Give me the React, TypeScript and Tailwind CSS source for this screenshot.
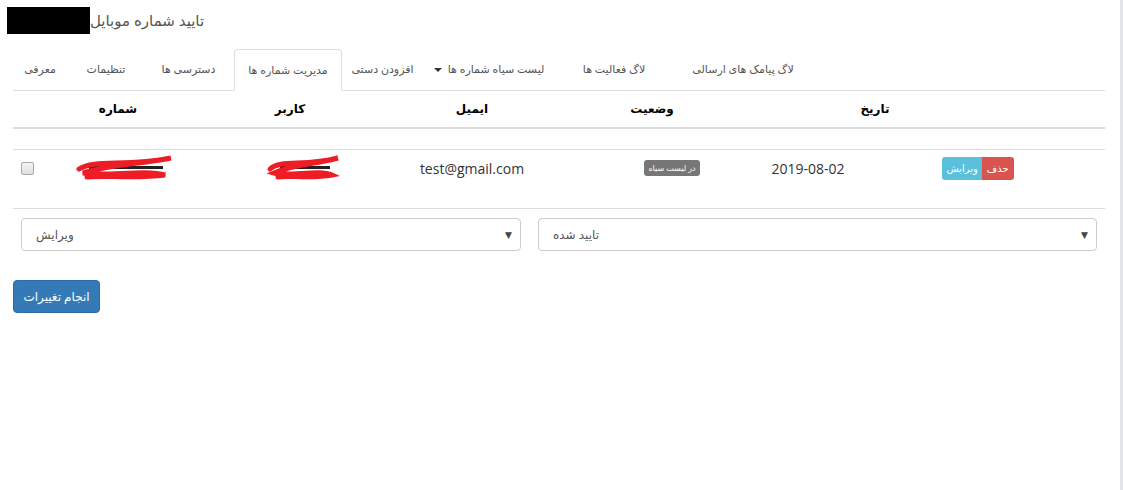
import React from 'react';

const fa = "font-['Open_Sans','DejaVu_Sans',sans-serif]";

const tabs = [
  { label: 'معرفی', w: 'w-[54px]' },
  { label: 'تنظیمات', w: 'w-[74px]' },
  { label: 'دسترسی ها', w: 'w-[87px]' },
  { label: 'مدیریت شماره ها', w: 'w-[108px]', active: true },
  { label: 'افزودن دستی', w: 'w-[77px]' },
  { label: 'لیست سیاه شماره ها', w: 'w-[132px]', caret: true },
  { label: 'لاگ فعالیت ها', w: 'w-[114px]' },
  { label: 'لاگ پیامک های ارسالی', w: 'w-[140px]' },
];

function Scribble({ width }: { width: number }) {
  // red marker over the hidden value
  return (
    <svg width={width} height="26" viewBox={`0 0 ${width} 26`}>
      <rect x="14" y="11" width={width - 26} height="3" fill="#222" />
      <rect x="10" y="17" width={width - 30} height="2" fill="#444" />
      <path
        d={`M4 14 C ${width * 0.2} 4, ${width * 0.5} 12, ${width - 4} 3 C ${width * 0.6} 10, ${width * 0.4} 8, 8 18 C ${width * 0.3} 22, ${width * 0.7} 14, ${width - 10} 20 C ${width * 0.6} 24, ${width * 0.3} 20, 12 22`}
        fill="none"
        stroke="#ee1c25"
        strokeWidth="5"
        strokeLinecap="round"
      />
    </svg>
  );
}

function FakeSelect({ value, className }: { value: string; className: string }) {
  return (
    <div className={`flex h-[33px] items-center justify-between rounded-[4px] border border-[#ccc] bg-white pl-[14px] pr-[8px] ${className}`}>
      <span className="text-[12px] text-[#555]">{value}</span>
      <span className="text-[9px] text-[#444]">▼</span>
    </div>
  );
}

export default function App() {
  return (
    <div className={`flex min-h-[490px] w-full bg-white ${fa}`}>
      <div className="flex-1 px-[13px] pr-[15px]">
        {/* title */}
        <div className="flex items-center pt-[7px]">
          <div className="-ml-[6px] h-[27px] w-[83px] bg-black" />
          <h1 className="text-[15px] leading-[27px] text-[#555]">تایید شماره موبایل</h1>
        </div>

        {/* tabs */}
        <div className="mt-[15px] flex h-[42px] items-stretch gap-[2px] border-b border-[#ddd]">
          {tabs.map((t, i) => (
            <div
              key={i}
              className={`${t.w} flex items-center justify-center rounded-t-[4px] text-[11px] text-[#555] ${
                t.active ? '-mb-px border border-b-white border-[#ddd] bg-white' : 'border border-transparent'
              }`}
            >
              {t.caret && (
                <span className="mr-[6px] h-0 w-0 border-x-[4px] border-t-[4px] border-x-transparent border-t-[#333]" />
              )}
              <span>{t.label}</span>
            </div>
          ))}
        </div>

        {/* table header */}
        <div className="grid h-[38px] grid-cols-[27px_156px_188px_176px_184px_262px_1fr] items-center border-b-2 border-[#ddd] text-center text-[12px] font-bold text-black">
          <div />
          <div>شماره</div>
          <div>کاربر</div>
          <div>ایمیل</div>
          <div>وضعیت</div>
          <div>تاریخ</div>
          <div />
        </div>
        <div className="h-[21px] border-b border-[#ddd]" />

        {/* data row */}
        <div className="grid h-[59px] grid-cols-[27px_156px_216px_120px_68px_144px_128px_212px_1fr] items-center border-b border-[#ddd] pb-[22px] text-center">
          <div className="flex justify-start pl-[8px]">
            <div className="h-[13px] w-[13px] rounded-[2px] border border-[#a9a9a9] bg-gradient-to-b from-[#f4f4f4] to-[#dedede]" />
          </div>
          <div className="flex justify-center pl-[14px]">
            <Scribble width={100} />
          </div>
          <div className="flex justify-center">
            <Scribble width={76} />
          </div>
          <div className="text-[14px] text-[#333]">test@gmail.com</div>
          <div />
          <div className="flex justify-center">
            <span className="rounded-[3px] bg-[#777] px-[4px] py-[2px] text-[8px] leading-[12px] text-white">در لیست سیاه</span>
          </div>
          <div className="text-[14px] text-[#333]">2019-08-02</div>
          <div className="flex justify-center">
            <span className="rounded-l-[3px] bg-[#5bc0de] px-[4px] text-[10px] leading-[23px] text-white">ویرایش</span>
            <span className="rounded-r-[3px] bg-[#d9534f] px-[5px] text-[10px] leading-[23px] text-white">حذف</span>
          </div>
          <div />
        </div>

        {/* selects */}
        <div className="mt-[9px] flex gap-[17px] pl-[8px]">
          <FakeSelect value="ویرایش" className="w-[500px]" />
          <FakeSelect value="تایید شده" className="w-[559px]" />
        </div>

        <button className="mt-[29px] h-[33px] w-[87px] rounded-[4px] border border-[#2e6da4] bg-[#337ab7] text-[12px] text-white">
          انجام تغییرات
        </button>
      </div>
      <div className="w-[3px] bg-[#e1e4e9]" />
    </div>
  );
}
